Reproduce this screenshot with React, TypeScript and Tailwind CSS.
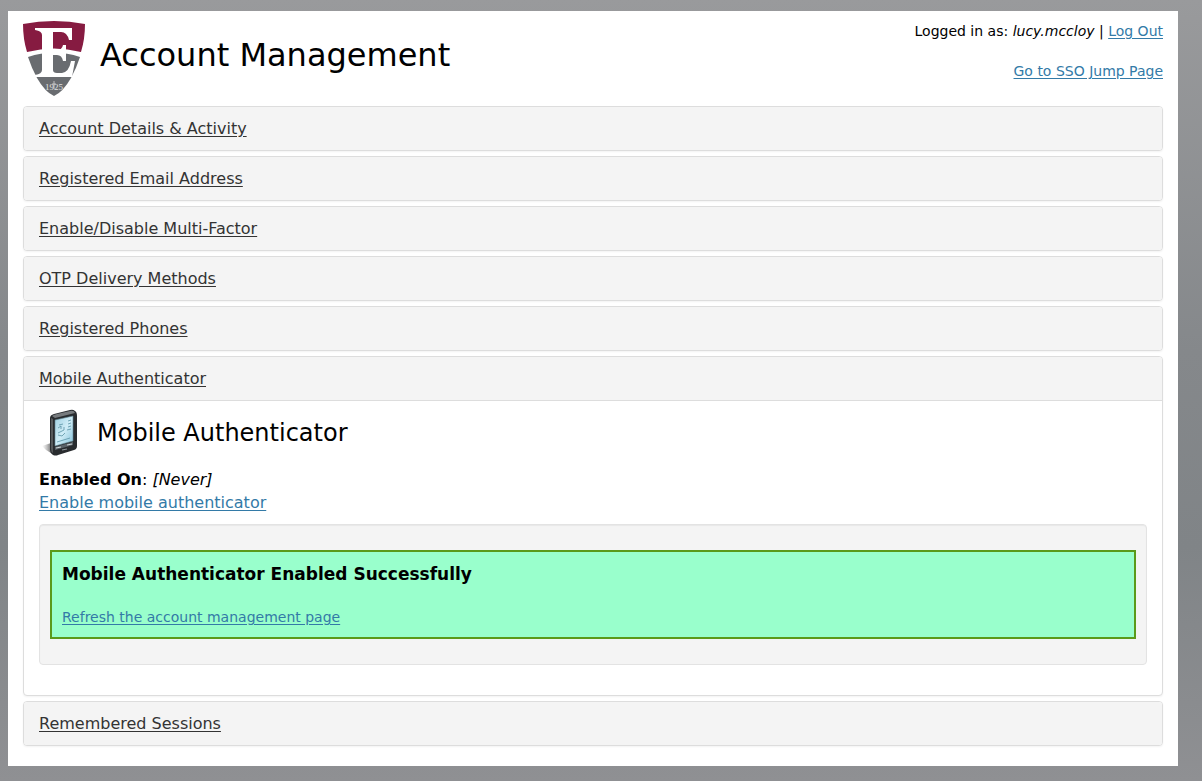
import type { ReactNode } from 'react'

const linkClass = 'text-[#337aa7] underline underline-offset-2'

function Shield() {
  return (
    <svg viewBox="0 0 62 75" className="h-[75px] w-[62px] shrink-0" role="img" aria-label="University shield">
      <path d="M0 3Q31 -3 62 3Q62 18 58 31Q31 24 4 31Q0 18 0 3Z" fill="#861b41" />
      <path d="M5 36Q31 27 57 36Q53 48 48 57Q40 71 31 75Q22 71 14 57Q9 48 5 36Z" fill="#696c70" />
      <path
        d="M12 7H49V19H46Q44 11 38 11H30V29H34Q39 29 40 24H43V40H40Q39 34 34 34H30V49Q30 52 34 52H39Q46 51 48 40H52L49 56H12V54Q19 53 19 49V14Q19 10 12 9Z"
        fill="#fff"
      />
      <text x="31" y="69" textAnchor="middle" fontSize="9" fill="#e0e0e0" fontFamily="Liberation Serif, serif">1925</text>
      <path d="M31 60V68M29 63H33" stroke="#d5d5d6" strokeWidth="0.8" />
    </svg>
  )
}

function PhoneIcon() {
  return (
    <svg viewBox="0 0 48 48" className="size-12 shrink-0" aria-hidden="true">
      <defs>
        <linearGradient id="screen" x1="0" y1="0" x2="1" y2="1">
          <stop offset="0" stopColor="#9fd0e2" />
          <stop offset="0.5" stopColor="#d0edf7" />
          <stop offset="1" stopColor="#86c2da" />
        </linearGradient>
        <linearGradient id="shadow" x1="0" y1="0" x2="1" y2="0">
          <stop offset="0" stopColor="#999" stopOpacity="0" />
          <stop offset="1" stopColor="#555" stopOpacity="0.8" />
        </linearGradient>
      </defs>
      <path d="M3 37L12 34V44Q7 42 3 37Z" fill="url(#shadow)" />
      <path d="M11 9Q11 6 15 5L31 1Q34 0 36 2Q38 3 38 7V37Q38 40 35 41L19 46Q17 47 14 46Q11 44 11 41Z" fill="#292c2f" />
      <path d="M13 7Q14 6 18 5L31 2Q35 1 36 4L16 9Z" fill="#777b7e" />
      <path d="M12 9L14 10V44Q12 43 12 40Z" fill="#56595b" />
      <path d="M16 11L34 7V32L16 37Z" fill="url(#screen)" stroke="#618491" strokeWidth="0.6" />
      <path d="M20 16L24 15M19 19L22 17V20M29 12L32 11M29 15L32 14M29 18L32 17M28 21L32 20M19 24L25 21V18M19 26L23 27L26 24M18 33L31 29" stroke="#5b93a5" strokeWidth="0.8" fill="none" />
      <path d="M16 38L34 33V36L16 41Z" fill="#5c646a" />
      <path d="M17 39L22 38M28 36L33 35" stroke="#d0d6d8" strokeWidth="1" />
      <path d="M23 41L28 40" stroke="#8e969a" strokeWidth="1.2" />
    </svg>
  )
}

function Panel({ title, children }: { title: string; children?: ReactNode }) {
  return (
    <section className="overflow-hidden rounded-[4px] border border-[#dddddd] bg-white shadow-xs">
      <h2 className="bg-[#f4f4f4] px-[15px] py-[10px] text-base leading-[23px] text-[#333]">
        <a href="#" className="underline underline-offset-2">{title}</a>
      </h2>
      {children && <div className="border-t border-[#dddddd] px-[15px] pt-2 pb-[30px]">{children}</div>}
    </section>
  )
}

export default function App() {
  return (
    <div className="min-h-screen bg-[linear-gradient(to_bottom,#999a9c,#85888b_45%,#808487_70%,#8f9093)] pt-[11px] pr-6 pb-[15px] pl-2 font-['Verdana','DejaVu_Sans',sans-serif] text-black">
      <main className="bg-white px-[15px] pt-[10px] pb-5">
        <header className="flex items-start justify-between pb-[10px]">
          <div className="flex items-center gap-[15px]">
            <Shield />
            <h1 className="pb-2 text-[32px] leading-10">Account Management</h1>
          </div>
          <div className="flex flex-col items-end gap-5 text-sm leading-5">
            <p>
              Logged in as: <i>lucy.mccloy</i> | <a href="#" className={linkClass}>Log Out</a>
            </p>
            <a href="#" className={linkClass}>Go to SSO Jump Page</a>
          </div>
        </header>

        <div className="flex flex-col gap-[5px]">
          <Panel title="Account Details & Activity" />
          <Panel title="Registered Email Address" />
          <Panel title="Enable/Disable Multi-Factor" />
          <Panel title="OTP Delivery Methods" />
          <Panel title="Registered Phones" />
          <Panel title="Mobile Authenticator">
            <div className="flex items-center gap-[10px]">
              <PhoneIcon />
              <h3 className="text-2xl">Mobile Authenticator</h3>
            </div>
            <div className="pt-[11px] text-base leading-[23px]">
              <p>
                <b>Enabled On</b>: <i>[Never]</i>
              </p>
              <a href="#" className={linkClass}>Enable mobile authenticator</a>
            </div>
            <div className="mt-[10px] rounded-[4px] border border-[#e3e3e3] bg-[#f4f4f4] px-[10px] py-[25px] shadow-[inset_0_1px_1px_rgba(0,0,0,0.05)]">
              <div className="border-2 border-[#5a9a1a] bg-[#99ffcc] p-[10px]">
                <h4 className="text-[17px] leading-[25px] font-bold">Mobile Authenticator Enabled Successfully</h4>
                <p className="pt-5 text-sm leading-5">
                  <a href="#" className={linkClass}>Refresh the account management page</a>
                </p>
              </div>
            </div>
          </Panel>
          <Panel title="Remembered Sessions" />
        </div>
      </main>
    </div>
  )
}
